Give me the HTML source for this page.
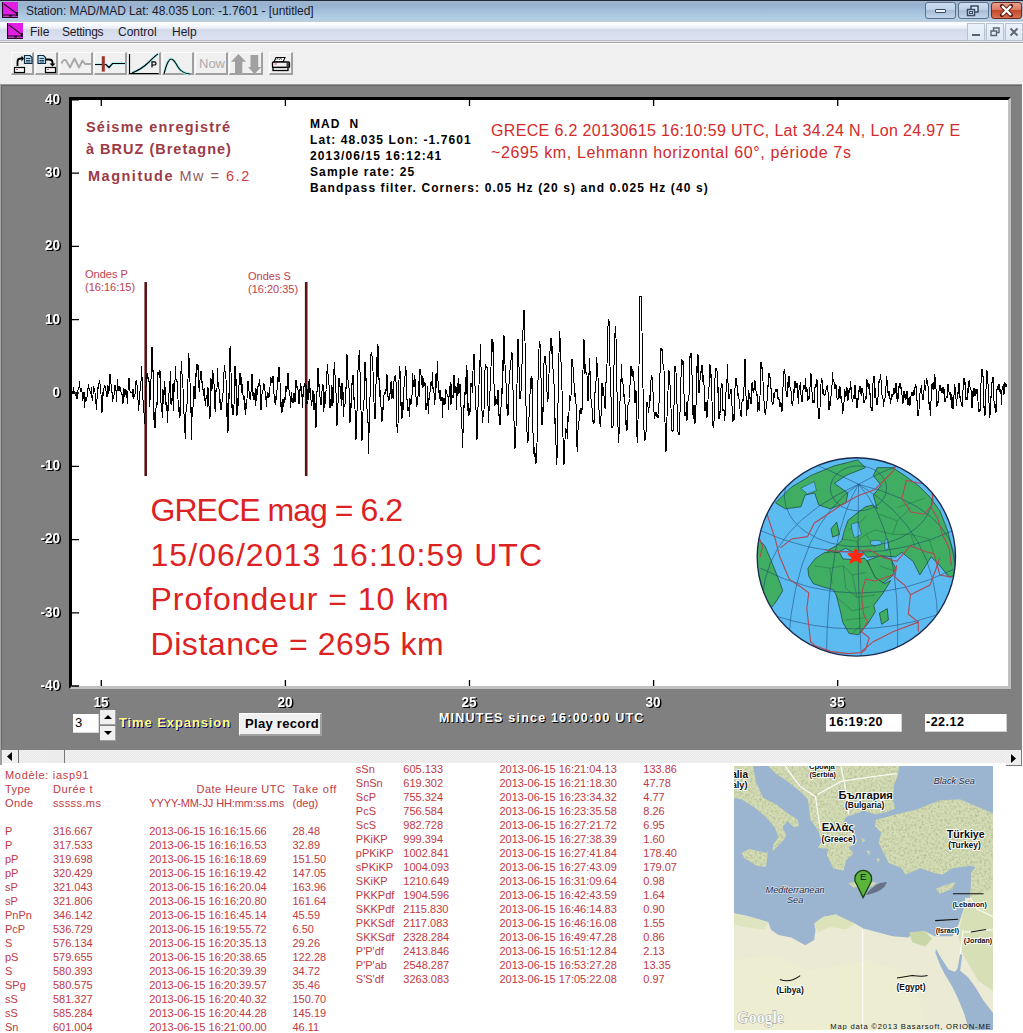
<!DOCTYPE html>
<html><head><meta charset="utf-8"><title>Station MAD</title>
<style>
*{margin:0;padding:0;box-sizing:border-box}
html,body{width:1023px;height:1033px;overflow:hidden}
body{position:relative;background:#fff;font-family:"Liberation Sans",sans-serif;color:#000}
.a{position:absolute;white-space:nowrap}
.tb{position:absolute;top:52px;height:23px;background:#f0f0f0;border-right:2px solid #a0a0a0;border-bottom:2px solid #a0a0a0;border-left:1px solid #fdfdfd;border-top:1px solid #fdfdfd}
.yl{position:absolute;font-weight:bold;font-size:13.5px;color:#fff;text-shadow:1.5px 1.5px 0 #000;transform:scaleY(1.14);text-align:right;width:40px;line-height:14px}
.xl{position:absolute;font-weight:bold;font-size:13.5px;color:#fff;text-shadow:1.5px 1.5px 0 #000;transform:scaleY(1.14);text-align:center;width:40px;line-height:14px}
.tbl{position:absolute;font-size:11px;color:#c0393f;line-height:14px}
.tbl div{height:14px;white-space:nowrap;position:relative}
.tbl span{position:absolute;top:0}
</style></head><body>
<!-- title bar -->
<div class="a" style="left:0;top:0;width:1023px;height:22px;background:linear-gradient(#1c2a3c 0px,#1c2a3c 1px,#a2b5cb 1px,#97b2d0 5px,#a6c1dc 12px,#b4d0e8 19px,#b8cad8 21px,#c8d4de 22px)"></div>
<svg class="a" style="left:2px;top:2px" width="16" height="16" viewBox="0 0 16 16"><rect x="0" y="0" width="16" height="16" fill="#e21ee2"/><rect x="1" y="13" width="14" height="2" fill="#b44cb4"/><path d="M0.5 0V16M0 15.5H16M1 13H16M2 2L14 11" stroke="#2a002a" stroke-width="1.2" fill="none"/><rect x="14" y="10" width="2" height="4" fill="#2a002a"/><rect x="7" y="13" width="3" height="1.5" fill="#2a002a"/></svg>
<div class="a" style="left:26px;top:3px;font-size:12px;line-height:16px;color:#1a1a2a;letter-spacing:-0.06px">Station: MAD/MAD Lat: 48.035 Lon: -1.7601 - [untitled]</div>
<!-- caption buttons -->
<div class="a" style="left:925px;top:2px;width:31px;height:17px;border:1px solid #5c6f86;border-radius:3px;background:linear-gradient(#d0dff0 0,#bcd0e8 45%,#a8bdd6 50%,#c0d4ea 100%)"></div>
<div class="a" style="left:935px;top:9px;width:11px;height:4px;border:1px solid #3a4a5e;background:#f0f6ff;border-radius:1px"></div>
<div class="a" style="left:958px;top:2px;width:31px;height:17px;border:1px solid #5c6f86;border-radius:3px;background:linear-gradient(#d0dff0 0,#bcd0e8 45%,#a8bdd6 50%,#c0d4ea 100%)"></div>
<svg class="a" style="left:966px;top:5px" width="14" height="12" viewBox="0 0 14 12"><rect x="5" y="1" width="7" height="6" fill="#dce8f6" stroke="#3a4a5e" stroke-width="1.5"/><rect x="1.5" y="4.5" width="7" height="6" fill="#dce8f6" stroke="#3a4a5e" stroke-width="1.5"/><rect x="3.5" y="6.5" width="3" height="2" fill="none" stroke="#3a4a5e" stroke-width="1"/></svg>
<div class="a" style="left:991px;top:2px;width:31px;height:17px;border:1px solid #6e2a22;border-radius:3px;background:linear-gradient(#eaa08e 0,#dc7a64 45%,#c44a2c 50%,#d8724e 100%)"></div>
<svg class="a" style="left:999px;top:4px" width="15" height="13" viewBox="0 0 15 13"><path d="M3 2L12 11M12 2L3 11" stroke="#5a2018" stroke-width="4.2" stroke-linecap="round"/><path d="M3 2L12 11M12 2L3 11" stroke="#fff" stroke-width="2.4" stroke-linecap="butt"/></svg>
<!-- menu bar -->
<div class="a" style="left:0;top:22px;width:1023px;height:22px;background:linear-gradient(#fbfdff 0px,#f9fbff 3px,#eef0f8 5px,#e6e9f8 7px,#d4dae8 7.5px,#dce2f3 17.5px,#b9bcc6 18px,#b9bcc6 19px,#e8e8e8 19px,#e8e8e8 20px,#a0a0a0 20px,#a0a0a0 21px,#ffffff 21px,#ffffff 22px)"></div>
<svg class="a" style="left:7px;top:23px" width="16" height="16" viewBox="0 0 16 16"><rect x="0" y="0" width="16" height="16" fill="#e21ee2"/><rect x="1" y="13" width="14" height="2" fill="#b44cb4"/><path d="M0.5 0V16M0 15.5H16M1 13H16M2 2L14 11" stroke="#2a002a" stroke-width="1.2" fill="none"/><rect x="14" y="10" width="2" height="4" fill="#2a002a"/><rect x="7" y="13" width="3" height="1.5" fill="#2a002a"/></svg>
<div class="a" style="left:30px;top:25px;font-size:12px;line-height:15px;color:#1a1a2a">File</div>
<div class="a" style="left:62px;top:25px;font-size:12px;line-height:15px;color:#1a1a2a;letter-spacing:-0.25px">Settings</div>
<div class="a" style="left:118px;top:25px;font-size:12px;line-height:15px;color:#1a1a2a">Control</div>
<div class="a" style="left:172px;top:25px;font-size:12px;line-height:15px;color:#1a1a2a">Help</div>
<!-- MDI buttons -->
<div class="a" style="left:967px;top:23px;width:18px;height:18px;border:1px solid #b6c2d0;background:linear-gradient(#eaf2fb,#dde8f4)"></div>
<div class="a" style="left:972px;top:34px;width:8px;height:2px;background:#5a6470"></div>
<div class="a" style="left:986px;top:23px;width:18px;height:18px;border:1px solid #b6c2d0;background:linear-gradient(#eaf2fb,#dde8f4)"></div>
<svg class="a" style="left:990px;top:27px" width="10" height="10" viewBox="0 0 10 10"><path d="M3.5 3.5V1H9V5.5H7M1 4H6.5V8.5H1Z" stroke="#5a6470" stroke-width="1.4" fill="none"/></svg>
<div class="a" style="left:1005px;top:23px;width:18px;height:18px;border:1px solid #b6c2d0;background:linear-gradient(#eaf2fb,#dde8f4)"></div>
<svg class="a" style="left:1009px;top:27px" width="10" height="10" viewBox="0 0 10 10"><path d="M1.5 1.5L8.5 8.5M8.5 1.5L1.5 8.5" stroke="#5a6470" stroke-width="1.8"/></svg>
<!-- toolbar bg -->
<div class="a" style="left:0;top:44px;width:1023px;height:40px;background:#f0f0f0"></div>
<!-- toolbar buttons -->
<div class="tb" style="left:11px;width:23px"></div>
<div class="tb" style="left:35px;width:23px"></div>
<div class="tb" style="left:59px;width:34px"></div>
<div class="tb" style="left:94px;width:33px"></div>
<div class="tb" style="left:128px;width:33px"></div>
<div class="tb" style="left:162px;width:32px"></div>
<div class="tb" style="left:195px;width:33px"></div>
<div class="tb" style="left:229px;width:34px"></div>
<div class="tb" style="left:269px;width:24px"></div>
<svg class="a" style="left:0;top:44px" width="300" height="40" viewBox="0 44 300 40">
 <!-- btn1 -->
 <path d="M24.5 55.5H30L32 57.5V63.5H24.5Z" fill="#bfe4f4" stroke="#0c2a44" stroke-width="1.2"/>
 <path d="M26 58.5H30.5M26 60.5H30.5M26 62H30.5" stroke="#0c2a44" stroke-width="0.9"/>
 <path d="M17.5 66V61.5Q17.5 58.5 21 58.5H22" stroke="#000" stroke-width="1.8" fill="none"/>
 <path d="M21.5 55.5L24 58.5L21.5 61.5Z" fill="#000"/>
 <rect x="14.5" y="67.5" width="10" height="5" fill="#fafafa" stroke="#000" stroke-width="1.2"/>
 <path d="M16 69.5H18" stroke="#d04050" stroke-width="0.9"/>
 <!-- btn2 -->
 <path d="M38 55.5H43.5L45.5 57.5V63.5H38Z" fill="#bfe4f4" stroke="#0c2a44" stroke-width="1.2"/>
 <path d="M39.5 58.5H44M39.5 60.5H44M39.5 62H44" stroke="#0c2a44" stroke-width="0.9"/>
 <path d="M46 59.5H49Q52.5 59.5 52.5 62.5V64" stroke="#000" stroke-width="1.8" fill="none"/>
 <path d="M49.5 63.5H55.5L52.5 66.5Z" fill="#000"/>
 <rect x="45.5" y="67.5" width="10" height="5" fill="#fafafa" stroke="#000" stroke-width="1.2"/>
 <path d="M47 69.5H49" stroke="#d04050" stroke-width="0.9"/>
 <!-- btn3 zigzag gray -->
 <path d="M61.5 63.5Q63.5 58.5 66 60.5L70 67.5L74.5 58.5L79 67.5L82.5 60.5L85 64H91" stroke="#a8a8a8" stroke-width="1.9" fill="none" stroke-linejoin="round"/>
 <!-- btn4 -->
 <path d="M95 64.5H106L109 67.5L112.5 63.5H125" stroke="#a8f0f0" stroke-width="2.6" fill="none"/>
 <path d="M95 64.5H106L109 67.5L112.5 63.5H125" stroke="#000" stroke-width="1.2" fill="none"/>
 <rect x="101.8" y="56.2" width="3" height="15.4" fill="#a0302a"/>
 <!-- btn5 -->
 <path d="M132 73Q142 69 149 62T158 54" stroke="#a8f0f0" stroke-width="2.8" fill="none"/>
 <path d="M132 73Q142 69 149 62T158 54" stroke="#000" stroke-width="1.1" fill="none"/>
 <path d="M129.5 54V73.5H158.5" stroke="#000" stroke-width="1.2" fill="none"/>
 <path d="M152 67.5V61.8H154.5Q156 61.8 156 63.4Q156 65 154.5 65H152" stroke="#000" stroke-width="1.2" fill="none"/>
 <!-- btn6 -->
 <path d="M164 74Q168 58 171.5 59Q174 59.5 178 67Q182 73.5 190 74" stroke="#a8f0f0" stroke-width="2.8" fill="none"/>
 <path d="M164 74Q168 58 171.5 59Q174 59.5 178 67Q182 73.5 190 74" stroke="#000" stroke-width="1.1" fill="none"/>
 <!-- arrows -->
 <path d="M231 61.8L238.5 54.1L246 61.8H242.3V73.6H235V61.8Z" fill="#a0a0a0"/>
 <path d="M250.5 55H258.2V67H261.3L254.5 74.1L248 67H250.5Z" fill="#a0a0a0"/>
 <!-- printer -->
 <path d="M276 57.5H285L283 62H274Z" fill="#fff" stroke="#000" stroke-width="1.1"/>
 <path d="M276.5 59.5L278 58.5L279 59.5L280.5 58.5L282 59.5" stroke="#000" stroke-width="0.7" fill="none"/>
 <rect x="272.5" y="62" width="17" height="5.5" rx="1" fill="#f4f4f4" stroke="#000" stroke-width="1.3"/>
 <rect x="273" y="67.5" width="15" height="3" fill="#fff" stroke="#000" stroke-width="1.3"/>
 <path d="M274.5 64H277" stroke="#d04050" stroke-width="0.9"/>
 <rect x="286.5" y="62.5" width="2.5" height="5" fill="#404040"/>
</svg>
<div class="a" style="left:199px;top:57px;font-size:13px;line-height:14px;color:#ababab">Now</div>
<!-- dark frame -->
<div class="a" style="left:0;top:84px;width:1022px;height:666px;background:#808080;border-top:1px solid #9a9a9a;border-left:1px solid #a8a8a8"><div style="position:absolute;left:0;top:0;right:0;bottom:0;border-top:1px solid #686868;border-left:1px solid #686868"></div></div>
<!-- plot frame -->
<div class="a" style="left:69px;top:97px;width:942px;height:592px;background:#fff;border-style:solid;border-width:3px;border-color:#000 #c0c0c0 #c0c0c0 #000"></div>
<svg class="a" style="left:0;top:0" width="1023" height="750" viewBox="0 0 1023 750">
 <g stroke="#000" stroke-width="1.3">
  <path d="M72 99.8H79M72 173.1H79M72 246.4H79M72 319.7H79M72 393H79M72 466.3H79M72 539.6H79M72 612.9H79M72 686H79"/>
  <path d="M101.3 100V106M285.4 100V106M469.5 100V106M653.6 100V106M837.7 100V106"/>
  <path d="M101.3 680V686M285.4 680V686M469.5 680V686M653.6 680V686M837.7 680V686"/>
 </g>
 <rect x="144.4" y="282" width="2.6" height="194" fill="#5a1414"/>
 <rect x="304.9" y="282" width="2.6" height="194" fill="#5a1414"/>
 <path d="M72.5,390.8 L73.0,394.1 L73.5,387.0 L74.0,390.7 L74.5,393.4 L75.0,394.0 L75.5,394.9 L76.0,393.7 L76.5,391.6 L77.0,399.3 L77.5,395.6 L78.0,390.5 L78.5,387.8 L79.0,388.6 L79.5,381.1 L80.0,387.6 L80.5,391.6 L81.0,389.6 L81.5,388.8 L82.0,391.8 L82.5,400.5 L83.0,397.8 L83.5,398.9 L84.0,391.9 L84.5,407.9 L85.0,397.0 L85.5,401.8 L86.0,396.9 L86.5,401.1 L87.0,397.1 L87.5,388.6 L88.0,388.4 L88.5,384.4 L89.0,388.5 L89.5,389.8 L90.0,391.2 L90.5,393.7 L91.0,391.9 L91.5,387.2 L92.0,398.3 L92.5,401.0 L93.0,394.9 L93.5,385.9 L94.0,388.4 L94.5,389.2 L95.0,392.4 L95.5,404.1 L96.0,402.5 L96.5,409.5 L97.0,399.2 L97.5,388.3 L98.0,389.3 L98.5,386.9 L99.0,383.6 L99.5,380.0 L100.0,384.3 L100.5,386.0 L101.0,394.1 L101.5,409.6 L102.0,412.9 L102.5,401.5 L103.0,391.8 L103.5,395.8 L104.0,388.0 L104.5,385.6 L105.0,386.4 L105.5,390.0 L106.0,391.2 L106.5,391.4 L107.0,397.1 L107.5,393.2 L108.0,385.3 L108.5,393.5 L109.0,391.1 L109.5,382.4 L110.0,373.9 L110.5,383.3 L111.0,383.8 L111.5,392.7 L112.0,392.2 L112.5,402.2 L113.0,396.9 L113.5,397.9 L114.0,394.9 L114.5,385.2 L115.0,384.8 L115.5,391.3 L116.0,390.1 L116.5,402.2 L117.0,391.1 L117.5,378.9 L118.0,386.4 L118.5,388.6 L119.0,391.2 L119.5,386.5 L120.0,389.5 L120.5,387.0 L121.0,392.0 L121.5,394.4 L122.0,394.4 L122.5,397.6 L123.0,403.6 L123.5,387.9 L124.0,392.5 L124.5,397.4 L125.0,388.9 L125.5,395.0 L126.0,393.0 L126.5,390.1 L127.0,397.9 L127.5,403.7 L128.0,390.9 L128.5,383.8 L129.0,378.1 L129.5,385.9 L130.0,391.0 L130.5,392.6 L131.0,393.1 L131.5,392.8 L132.0,392.5 L132.5,396.8 L133.0,388.8 L133.5,399.0 L134.0,396.3 L134.5,396.8 L135.0,394.4 L135.5,386.8 L136.0,381.6 L136.5,379.9 L137.0,384.5 L137.5,395.4 L138.0,399.5 L138.5,411.0 L139.0,405.7 L139.5,399.2 L140.0,391.4 L140.5,388.0 L141.0,381.8 L141.5,366.5 L142.0,376.9 L142.5,389.6 L143.0,399.6 L143.5,407.0 L144.0,413.0 L144.5,424.1 L145.0,413.4 L145.5,405.3 L146.0,386.4 L146.5,373.9 L147.0,379.2 L147.5,372.7 L148.0,377.4 L148.5,381.7 L149.0,379.8 L149.5,406.6 L150.0,398.5 L150.5,400.4 L151.0,379.8 L151.5,364.5 L152.0,346.8 L152.5,361.0 L153.0,371.9 L153.5,370.3 L154.0,420.2 L154.5,411.6 L155.0,428.3 L155.5,410.6 L156.0,407.8 L156.5,405.2 L157.0,402.1 L157.5,405.4 L158.0,372.4 L158.5,373.6 L159.0,371.8 L159.5,378.4 L160.0,370.5 L160.5,390.5 L161.0,403.1 L161.5,409.2 L162.0,412.3 L162.5,418.0 L163.0,389.4 L163.5,403.8 L164.0,395.6 L164.5,380.9 L165.0,386.4 L165.5,392.8 L166.0,404.4 L166.5,403.4 L167.0,410.7 L167.5,423.3 L168.0,405.2 L168.5,410.7 L169.0,393.1 L169.5,381.5 L170.0,385.9 L170.5,370.7 L171.0,403.8 L171.5,404.0 L172.0,398.3 L172.5,384.4 L173.0,401.3 L173.5,410.9 L174.0,382.6 L174.5,392.3 L175.0,380.6 L175.5,366.2 L176.0,379.1 L176.5,381.0 L177.0,381.3 L177.5,393.2 L178.0,399.2 L178.5,412.1 L179.0,406.7 L179.5,417.6 L180.0,417.9 L180.5,376.2 L181.0,370.9 L181.5,360.6 L182.0,374.2 L182.5,374.1 L183.0,388.0 L183.5,410.2 L184.0,413.6 L184.5,433.1 L185.0,432.0 L185.5,438.5 L186.0,411.8 L186.5,408.0 L187.0,404.5 L187.5,401.8 L188.0,379.2 L188.5,353.2 L189.0,358.4 L189.5,359.3 L190.0,382.1 L190.5,413.1 L191.0,404.6 L191.5,439.5 L192.0,417.6 L192.5,406.8 L193.0,408.0 L193.5,388.7 L194.0,385.6 L194.5,389.7 L195.0,399.4 L195.5,387.2 L196.0,373.0 L196.5,377.4 L197.0,363.7 L197.5,369.1 L198.0,370.0 L198.5,365.2 L199.0,387.9 L199.5,391.8 L200.0,380.4 L200.5,376.4 L201.0,371.3 L201.5,376.5 L202.0,382.6 L202.5,381.8 L203.0,390.2 L203.5,389.5 L204.0,396.0 L204.5,388.5 L205.0,401.1 L205.5,405.7 L206.0,398.6 L206.5,397.7 L207.0,395.0 L207.5,406.8 L208.0,387.2 L208.5,401.0 L209.0,406.0 L209.5,407.2 L210.0,418.7 L210.5,378.5 L211.0,386.9 L211.5,378.8 L212.0,390.7 L212.5,369.8 L213.0,373.0 L213.5,383.2 L214.0,383.6 L214.5,386.3 L215.0,409.0 L215.5,412.4 L216.0,390.5 L216.5,392.3 L217.0,388.5 L217.5,367.8 L218.0,381.7 L218.5,387.9 L219.0,388.3 L219.5,402.9 L220.0,399.5 L220.5,400.4 L221.0,410.2 L221.5,408.2 L222.0,402.5 L222.5,396.5 L223.0,393.0 L223.5,386.9 L224.0,372.5 L224.5,364.8 L225.0,370.9 L225.5,377.5 L226.0,378.6 L226.5,416.4 L227.0,416.7 L227.5,402.9 L228.0,432.9 L228.5,393.2 L229.0,400.2 L229.5,373.5 L230.0,347.9 L230.5,345.8 L231.0,372.2 L231.5,390.8 L232.0,408.3 L232.5,403.7 L233.0,414.5 L233.5,412.6 L234.0,405.5 L234.5,386.4 L235.0,366.4 L235.5,368.6 L236.0,385.9 L236.5,379.2 L237.0,416.1 L237.5,398.3 L238.0,406.3 L238.5,394.6 L239.0,385.5 L239.5,377.1 L240.0,373.4 L240.5,377.6 L241.0,384.9 L241.5,376.7 L242.0,392.9 L242.5,383.9 L243.0,395.1 L243.5,400.1 L244.0,396.3 L244.5,396.7 L245.0,410.1 L245.5,414.5 L246.0,402.8 L246.5,409.3 L247.0,399.5 L247.5,381.9 L248.0,381.3 L248.5,384.7 L249.0,390.7 L249.5,391.7 L250.0,399.2 L250.5,399.6 L251.0,392.1 L251.5,389.1 L252.0,373.9 L252.5,378.6 L253.0,395.7 L253.5,392.1 L254.0,400.2 L254.5,396.7 L255.0,393.3 L255.5,405.8 L256.0,388.4 L256.5,401.0 L257.0,394.5 L257.5,393.0 L258.0,385.6 L258.5,384.1 L259.0,386.7 L259.5,378.6 L260.0,384.5 L260.5,391.3 L261.0,410.1 L261.5,395.1 L262.0,394.3 L262.5,393.8 L263.0,390.4 L263.5,383.3 L264.0,385.3 L264.5,384.7 L265.0,390.8 L265.5,399.5 L266.0,396.5 L266.5,407.0 L267.0,396.5 L267.5,392.2 L268.0,398.1 L268.5,394.6 L269.0,395.8 L269.5,396.4 L270.0,386.7 L270.5,376.7 L271.0,383.1 L271.5,378.0 L272.0,380.4 L272.5,383.0 L273.0,375.6 L273.5,392.7 L274.0,394.0 L274.5,402.1 L275.0,401.4 L275.5,404.5 L276.0,396.5 L276.5,399.6 L277.0,390.3 L277.5,377.1 L278.0,382.8 L278.5,376.7 L279.0,366.9 L279.5,376.3 L280.0,382.3 L280.5,407.4 L281.0,401.4 L281.5,409.6 L282.0,412.5 L282.5,403.0 L283.0,399.0 L283.5,407.3 L284.0,403.3 L284.5,400.8 L285.0,396.9 L285.5,400.1 L286.0,386.0 L286.5,392.3 L287.0,389.8 L287.5,389.5 L288.0,373.1 L288.5,374.2 L289.0,390.3 L289.5,391.7 L290.0,395.6 L290.5,407.7 L291.0,402.7 L291.5,392.3 L292.0,398.6 L292.5,398.3 L293.0,402.8 L293.5,397.5 L294.0,392.7 L294.5,400.5 L295.0,402.4 L295.5,396.0 L296.0,379.6 L296.5,383.4 L297.0,387.9 L297.5,387.0 L298.0,389.7 L298.5,395.4 L299.0,403.9 L299.5,391.1 L300.0,389.1 L300.5,382.9 L301.0,390.6 L301.5,386.0 L302.0,397.3 L302.5,408.3 L303.0,394.0 L303.5,396.8 L304.0,386.6 L304.5,384.8 L305.0,383.5 L305.5,387.4 L306.0,384.6 L306.5,388.0 L307.0,404.1 L307.5,400.5 L308.0,389.0 L308.5,399.6 L309.0,380.8 L309.5,379.2 L310.0,392.9 L310.5,388.5 L311.0,399.5 L311.5,406.4 L312.0,401.7 L312.5,399.4 L313.0,390.4 L313.5,407.8 L314.0,410.2 L314.5,394.2 L315.0,403.3 L315.5,405.9 L316.0,427.8 L316.5,406.7 L317.0,390.8 L317.5,391.0 L318.0,367.6 L318.5,387.0 L319.0,383.3 L319.5,394.4 L320.0,397.0 L320.5,403.6 L321.0,405.1 L321.5,398.1 L322.0,390.6 L322.5,388.5 L323.0,384.5 L323.5,411.9 L324.0,406.6 L324.5,408.0 L325.0,392.3 L325.5,404.4 L326.0,391.1 L326.5,389.5 L327.0,370.9 L327.5,363.9 L328.0,374.1 L328.5,380.2 L329.0,385.3 L329.5,389.6 L330.0,408.4 L330.5,399.2 L331.0,406.4 L331.5,386.0 L332.0,386.9 L332.5,404.9 L333.0,404.0 L333.5,368.6 L334.0,371.6 L334.5,361.7 L335.0,374.5 L335.5,385.1 L336.0,392.8 L336.5,410.4 L337.0,425.6 L337.5,404.2 L338.0,403.0 L338.5,400.4 L339.0,377.7 L339.5,387.4 L340.0,385.3 L340.5,399.2 L341.0,392.4 L341.5,406.0 L342.0,382.7 L342.5,399.9 L343.0,391.6 L343.5,417.4 L344.0,406.0 L344.5,406.3 L345.0,404.8 L345.5,387.5 L346.0,389.9 L346.5,357.8 L347.0,354.5 L347.5,375.8 L348.0,379.8 L348.5,387.4 L349.0,387.8 L349.5,393.2 L350.0,422.6 L350.5,403.1 L351.0,407.8 L351.5,406.8 L352.0,383.3 L352.5,384.6 L353.0,375.0 L353.5,387.4 L354.0,400.3 L354.5,396.9 L355.0,409.4 L355.5,427.7 L356.0,439.8 L356.5,427.0 L357.0,411.3 L357.5,405.6 L358.0,369.8 L358.5,366.7 L359.0,355.0 L359.5,350.5 L360.0,372.0 L360.5,384.0 L361.0,410.1 L361.5,435.7 L362.0,441.3 L362.5,416.8 L363.0,411.8 L363.5,402.0 L364.0,400.7 L364.5,378.3 L365.0,362.4 L365.5,364.5 L366.0,380.8 L366.5,378.1 L367.0,408.9 L367.5,421.6 L368.0,420.7 L368.5,453.6 L369.0,433.0 L369.5,422.7 L370.0,397.8 L370.5,374.6 L371.0,354.2 L371.5,352.5 L372.0,356.3 L372.5,363.0 L373.0,371.2 L373.5,384.1 L374.0,402.2 L374.5,413.6 L375.0,419.2 L375.5,408.7 L376.0,384.5 L376.5,372.4 L377.0,357.0 L377.5,376.5 L378.0,343.9 L378.5,379.7 L379.0,379.9 L379.5,378.2 L380.0,396.8 L380.5,389.6 L381.0,406.9 L381.5,414.8 L382.0,421.8 L382.5,410.0 L383.0,406.6 L383.5,409.9 L384.0,394.7 L384.5,393.2 L385.0,393.8 L385.5,391.1 L386.0,389.1 L386.5,390.5 L387.0,374.3 L387.5,387.0 L388.0,396.6 L388.5,401.0 L389.0,396.3 L389.5,400.3 L390.0,393.5 L390.5,393.0 L391.0,382.0 L391.5,380.9 L392.0,398.6 L392.5,392.5 L393.0,389.3 L393.5,398.5 L394.0,380.7 L394.5,380.0 L395.0,375.9 L395.5,375.9 L396.0,381.5 L396.5,396.1 L397.0,427.3 L397.5,432.9 L398.0,424.5 L398.5,390.2 L399.0,380.1 L399.5,365.8 L400.0,370.6 L400.5,392.5 L401.0,405.7 L401.5,402.0 L402.0,418.7 L402.5,402.2 L403.0,410.8 L403.5,401.7 L404.0,387.5 L404.5,377.0 L405.0,376.2 L405.5,366.3 L406.0,369.1 L406.5,399.1 L407.0,399.3 L407.5,399.7 L408.0,411.0 L408.5,408.1 L409.0,406.9 L409.5,417.0 L410.0,398.5 L410.5,404.3 L411.0,404.4 L411.5,398.0 L412.0,395.7 L412.5,373.1 L413.0,382.5 L413.5,380.0 L414.0,387.4 L414.5,375.5 L415.0,379.2 L415.5,384.4 L416.0,397.1 L416.5,406.1 L417.0,405.2 L417.5,400.4 L418.0,395.6 L418.5,395.6 L419.0,381.3 L419.5,396.5 L420.0,369.4 L420.5,373.6 L421.0,375.3 L421.5,375.8 L422.0,385.2 L422.5,375.7 L423.0,388.0 L423.5,378.1 L424.0,384.2 L424.5,385.9 L425.0,382.4 L425.5,403.6 L426.0,409.8 L426.5,409.4 L427.0,403.7 L427.5,385.9 L428.0,406.2 L428.5,414.4 L429.0,397.7 L429.5,399.9 L430.0,392.6 L430.5,381.8 L431.0,386.7 L431.5,380.9 L432.0,384.2 L432.5,372.1 L433.0,389.2 L433.5,386.8 L434.0,392.7 L434.5,405.2 L435.0,400.0 L435.5,389.9 L436.0,374.4 L436.5,388.2 L437.0,373.7 L437.5,361.4 L438.0,381.2 L438.5,389.0 L439.0,392.6 L439.5,398.8 L440.0,390.0 L440.5,398.2 L441.0,400.9 L441.5,397.5 L442.0,397.0 L442.5,418.2 L443.0,399.0 L443.5,404.6 L444.0,397.8 L444.5,403.0 L445.0,404.9 L445.5,389.3 L446.0,390.6 L446.5,391.0 L447.0,394.2 L447.5,396.2 L448.0,396.3 L448.5,410.2 L449.0,397.4 L449.5,392.2 L450.0,386.2 L450.5,382.1 L451.0,404.7 L451.5,384.3 L452.0,397.6 L452.5,396.6 L453.0,398.3 L453.5,392.9 L454.0,374.8 L454.5,386.1 L455.0,393.2 L455.5,390.7 L456.0,386.3 L456.5,409.7 L457.0,395.6 L457.5,393.6 L458.0,383.2 L458.5,377.8 L459.0,393.5 L459.5,386.8 L460.0,383.6 L460.5,386.3 L461.0,406.9 L461.5,410.0 L462.0,428.8 L462.5,447.7 L463.0,434.2 L463.5,414.5 L464.0,405.2 L464.5,407.7 L465.0,392.0 L465.5,376.6 L466.0,395.3 L466.5,365.1 L467.0,368.5 L467.5,410.8 L468.0,402.4 L468.5,416.1 L469.0,407.4 L469.5,414.7 L470.0,412.5 L470.5,396.4 L471.0,383.1 L471.5,383.6 L472.0,387.4 L472.5,392.8 L473.0,370.6 L473.5,366.3 L474.0,353.8 L474.5,369.5 L475.0,385.6 L475.5,403.4 L476.0,409.8 L476.5,429.7 L477.0,439.6 L477.5,421.2 L478.0,406.7 L478.5,401.9 L479.0,385.9 L479.5,360.4 L480.0,367.3 L480.5,343.6 L481.0,367.2 L481.5,371.6 L482.0,411.1 L482.5,422.7 L483.0,417.5 L483.5,415.2 L484.0,411.0 L484.5,374.2 L485.0,370.2 L485.5,365.1 L486.0,365.8 L486.5,368.1 L487.0,365.9 L487.5,394.4 L488.0,405.8 L488.5,422.7 L489.0,408.7 L489.5,410.7 L490.0,391.1 L490.5,379.2 L491.0,367.1 L491.5,346.2 L492.0,339.1 L492.5,351.5 L493.0,347.2 L493.5,342.5 L494.0,383.7 L494.5,385.5 L495.0,405.6 L495.5,396.4 L496.0,404.8 L496.5,398.7 L497.0,400.8 L497.5,405.1 L498.0,389.9 L498.5,401.8 L499.0,415.7 L499.5,414.5 L500.0,425.0 L500.5,413.9 L501.0,407.4 L501.5,404.8 L502.0,388.0 L502.5,393.6 L503.0,359.8 L503.5,370.6 L504.0,335.3 L504.5,349.8 L505.0,364.2 L505.5,377.2 L506.0,382.8 L506.5,399.8 L507.0,409.2 L507.5,404.3 L508.0,415.7 L508.5,399.2 L509.0,384.3 L509.5,370.5 L510.0,370.8 L510.5,362.6 L511.0,360.1 L511.5,356.2 L512.0,352.0 L512.5,379.0 L513.0,389.8 L513.5,410.1 L514.0,420.9 L514.5,430.8 L515.0,448.3 L515.5,447.8 L516.0,426.9 L516.5,412.8 L517.0,385.2 L517.5,354.5 L518.0,338.8 L518.5,346.6 L519.0,366.8 L519.5,377.1 L520.0,399.4 L520.5,392.8 L521.0,391.6 L521.5,380.7 L522.0,364.8 L522.5,344.7 L523.0,330.9 L523.5,317.5 L524.0,309.7 L524.5,327.5 L525.0,341.2 L525.5,381.4 L526.0,405.5 L526.5,430.1 L527.0,432.0 L527.5,442.7 L528.0,441.0 L528.5,432.5 L529.0,417.9 L529.5,398.9 L530.0,394.7 L530.5,377.9 L531.0,389.8 L531.5,379.4 L532.0,375.8 L532.5,413.9 L533.0,432.8 L533.5,454.4 L534.0,446.3 L534.5,456.7 L535.0,452.8 L535.5,462.1 L536.0,463.6 L536.5,451.5 L537.0,442.8 L537.5,414.9 L538.0,380.5 L538.5,358.0 L539.0,348.7 L539.5,341.9 L540.0,342.0 L540.5,377.3 L541.0,378.1 L541.5,394.4 L542.0,425.4 L542.5,407.1 L543.0,413.8 L543.5,391.4 L544.0,362.8 L544.5,357.4 L545.0,356.4 L545.5,360.2 L546.0,364.9 L546.5,374.5 L547.0,391.6 L547.5,402.0 L548.0,399.7 L548.5,386.2 L549.0,374.0 L549.5,358.8 L550.0,350.9 L550.5,350.1 L551.0,338.0 L551.5,353.5 L552.0,345.5 L552.5,367.0 L553.0,368.4 L553.5,378.7 L554.0,384.0 L554.5,398.5 L555.0,423.6 L555.5,418.5 L556.0,444.5 L556.5,464.8 L557.0,459.8 L557.5,423.1 L558.0,403.8 L558.5,381.7 L559.0,353.5 L559.5,331.1 L560.0,338.2 L560.5,348.1 L561.0,361.9 L561.5,372.0 L562.0,389.9 L562.5,418.4 L563.0,437.4 L563.5,464.8 L564.0,464.8 L564.5,456.2 L565.0,439.8 L565.5,428.3 L566.0,432.7 L566.5,429.5 L567.0,432.7 L567.5,438.9 L568.0,416.4 L568.5,421.6 L569.0,412.4 L569.5,394.9 L570.0,396.4 L570.5,401.2 L571.0,396.2 L571.5,376.1 L572.0,358.9 L572.5,360.7 L573.0,367.1 L573.5,377.8 L574.0,383.1 L574.5,387.8 L575.0,397.4 L575.5,393.5 L576.0,403.5 L576.5,411.8 L577.0,446.8 L577.5,452.2 L578.0,430.0 L578.5,422.9 L579.0,421.5 L579.5,417.3 L580.0,410.6 L580.5,409.6 L581.0,414.1 L581.5,408.2 L582.0,410.7 L582.5,391.5 L583.0,369.9 L583.5,355.8 L584.0,339.5 L584.5,347.2 L585.0,373.7 L585.5,363.8 L586.0,372.9 L586.5,373.0 L587.0,375.3 L587.5,397.1 L588.0,401.4 L588.5,388.2 L589.0,373.5 L589.5,358.3 L590.0,374.8 L590.5,370.7 L591.0,399.2 L591.5,403.5 L592.0,407.6 L592.5,418.9 L593.0,422.4 L593.5,421.1 L594.0,423.7 L594.5,409.6 L595.0,392.6 L595.5,392.1 L596.0,381.9 L596.5,357.2 L597.0,363.3 L597.5,363.2 L598.0,376.9 L598.5,397.4 L599.0,409.6 L599.5,422.1 L600.0,424.2 L600.5,426.8 L601.0,415.8 L601.5,409.3 L602.0,383.1 L602.5,387.8 L603.0,395.5 L603.5,387.5 L604.0,395.7 L604.5,400.9 L605.0,407.5 L605.5,408.3 L606.0,382.9 L606.5,383.0 L607.0,364.0 L607.5,352.7 L608.0,326.2 L608.5,318.8 L609.0,320.4 L609.5,346.9 L610.0,366.2 L610.5,395.5 L611.0,396.7 L611.5,422.2 L612.0,428.1 L612.5,425.7 L613.0,427.8 L613.5,395.0 L614.0,365.4 L614.5,347.0 L615.0,333.6 L615.5,325.8 L616.0,338.4 L616.5,366.8 L617.0,391.5 L617.5,412.0 L618.0,426.9 L618.5,442.9 L619.0,435.2 L619.5,412.3 L620.0,401.6 L620.5,382.1 L621.0,379.9 L621.5,364.0 L622.0,381.8 L622.5,377.7 L623.0,383.6 L623.5,397.2 L624.0,394.1 L624.5,399.8 L625.0,403.7 L625.5,425.3 L626.0,419.9 L626.5,425.3 L627.0,430.5 L627.5,422.1 L628.0,404.7 L628.5,403.4 L629.0,401.6 L629.5,398.5 L630.0,385.5 L630.5,378.1 L631.0,366.2 L631.5,375.5 L632.0,368.4 L632.5,377.2 L633.0,372.1 L633.5,370.9 L634.0,381.0 L634.5,390.1 L635.0,402.6 L635.5,398.6 L636.0,390.2 L636.5,414.0 L637.0,437.2 L637.5,442.7 L638.0,420.0 L638.5,405.4 L639.0,365.9 L639.5,330.8 L640.0,296.2 L640.5,296.2 L641.0,296.2 L641.5,303.9 L642.0,330.7 L642.5,368.8 L643.0,388.3 L643.5,414.0 L644.0,430.0 L644.5,431.5 L645.0,440.5 L645.5,435.4 L646.0,432.6 L646.5,419.0 L647.0,402.5 L647.5,404.0 L648.0,406.6 L648.5,412.8 L649.0,408.7 L649.5,394.9 L650.0,401.6 L650.5,396.0 L651.0,380.3 L651.5,376.3 L652.0,377.0 L652.5,386.3 L653.0,391.6 L653.5,398.5 L654.0,412.1 L654.5,418.8 L655.0,416.3 L655.5,415.1 L656.0,412.0 L656.5,416.3 L657.0,416.3 L657.5,413.8 L658.0,417.8 L658.5,414.5 L659.0,403.4 L659.5,386.2 L660.0,372.9 L660.5,370.3 L661.0,348.4 L661.5,351.1 L662.0,348.9 L662.5,350.9 L663.0,363.6 L663.5,364.9 L664.0,370.4 L664.5,384.4 L665.0,421.9 L665.5,449.9 L666.0,452.1 L666.5,438.3 L667.0,417.0 L667.5,407.9 L668.0,391.2 L668.5,379.1 L669.0,370.5 L669.5,382.0 L670.0,384.7 L670.5,395.0 L671.0,408.3 L671.5,419.2 L672.0,431.0 L672.5,430.7 L673.0,432.1 L673.5,414.4 L674.0,405.5 L674.5,391.2 L675.0,365.8 L675.5,371.0 L676.0,372.3 L676.5,390.6 L677.0,403.7 L677.5,427.7 L678.0,432.0 L678.5,434.6 L679.0,434.7 L679.5,433.7 L680.0,412.5 L680.5,395.5 L681.0,377.3 L681.5,359.1 L682.0,363.7 L682.5,365.2 L683.0,360.5 L683.5,376.5 L684.0,393.5 L684.5,408.4 L685.0,416.4 L685.5,413.3 L686.0,412.5 L686.5,401.9 L687.0,420.6 L687.5,408.1 L688.0,400.7 L688.5,397.0 L689.0,395.5 L689.5,387.2 L690.0,356.2 L690.5,357.6 L691.0,352.7 L691.5,372.7 L692.0,375.2 L692.5,382.7 L693.0,415.2 L693.5,418.9 L694.0,404.7 L694.5,411.4 L695.0,424.0 L695.5,410.6 L696.0,405.0 L696.5,391.1 L697.0,366.5 L697.5,373.0 L698.0,354.3 L698.5,380.2 L699.0,393.1 L699.5,381.2 L700.0,380.3 L700.5,374.7 L701.0,370.8 L701.5,372.5 L702.0,364.9 L702.5,381.9 L703.0,375.8 L703.5,375.5 L704.0,384.9 L704.5,393.3 L705.0,410.9 L705.5,405.9 L706.0,402.0 L706.5,417.1 L707.0,417.4 L707.5,413.2 L708.0,399.8 L708.5,394.1 L709.0,387.5 L709.5,372.2 L710.0,364.5 L710.5,377.7 L711.0,373.9 L711.5,387.2 L712.0,401.3 L712.5,423.2 L713.0,425.6 L713.5,428.0 L714.0,421.9 L714.5,397.3 L715.0,378.4 L715.5,368.7 L716.0,367.7 L716.5,369.1 L717.0,370.6 L717.5,392.8 L718.0,385.2 L718.5,418.0 L719.0,418.9 L719.5,411.5 L720.0,415.2 L720.5,413.5 L721.0,388.4 L721.5,386.3 L722.0,383.4 L722.5,403.9 L723.0,411.4 L723.5,409.6 L724.0,409.9 L724.5,420.9 L725.0,416.5 L725.5,411.1 L726.0,392.8 L726.5,380.6 L727.0,379.6 L727.5,364.4 L728.0,382.7 L728.5,383.6 L729.0,399.4 L729.5,394.2 L730.0,394.1 L730.5,391.9 L731.0,389.0 L731.5,393.1 L732.0,405.5 L732.5,412.2 L733.0,421.8 L733.5,414.5 L734.0,420.3 L734.5,410.9 L735.0,388.0 L735.5,382.8 L736.0,377.7 L736.5,386.2 L737.0,384.8 L737.5,395.5 L738.0,394.3 L738.5,393.0 L739.0,398.7 L739.5,401.2 L740.0,409.4 L740.5,414.5 L741.0,415.5 L741.5,417.2 L742.0,402.3 L742.5,399.6 L743.0,401.2 L743.5,388.9 L744.0,387.3 L744.5,370.8 L745.0,358.8 L745.5,370.0 L746.0,395.5 L746.5,415.6 L747.0,399.8 L747.5,405.0 L748.0,409.8 L748.5,390.2 L749.0,399.4 L749.5,393.5 L750.0,396.5 L750.5,402.6 L751.0,404.3 L751.5,382.9 L752.0,391.7 L752.5,382.1 L753.0,387.4 L753.5,393.0 L754.0,389.8 L754.5,387.3 L755.0,380.5 L755.5,388.1 L756.0,390.7 L756.5,396.4 L757.0,393.0 L757.5,412.0 L758.0,402.0 L758.5,410.3 L759.0,406.1 L759.5,411.4 L760.0,396.0 L760.5,378.4 L761.0,362.1 L761.5,368.8 L762.0,366.5 L762.5,370.9 L763.0,381.2 L763.5,394.3 L764.0,401.1 L764.5,409.8 L765.0,412.6 L765.5,415.3 L766.0,408.6 L766.5,406.5 L767.0,400.8 L767.5,395.9 L768.0,384.7 L768.5,386.7 L769.0,373.0 L769.5,378.2 L770.0,376.4 L770.5,388.1 L771.0,388.5 L771.5,396.6 L772.0,402.2 L772.5,404.6 L773.0,404.7 L773.5,394.4 L774.0,395.2 L774.5,397.6 L775.0,392.1 L775.5,389.1 L776.0,392.1 L776.5,391.3 L777.0,389.4 L777.5,390.3 L778.0,398.3 L778.5,397.6 L779.0,400.4 L779.5,399.9 L780.0,406.6 L780.5,403.0 L781.0,403.2 L781.5,409.0 L782.0,411.6 L782.5,391.3 L783.0,387.4 L783.5,385.3 L784.0,371.6 L784.5,369.1 L785.0,373.7 L785.5,384.4 L786.0,390.7 L786.5,393.8 L787.0,397.1 L787.5,392.2 L788.0,382.4 L788.5,387.7 L789.0,376.3 L789.5,381.5 L790.0,386.6 L790.5,390.5 L791.0,390.8 L791.5,400.9 L792.0,403.9 L792.5,406.4 L793.0,400.8 L793.5,400.3 L794.0,389.1 L794.5,393.1 L795.0,381.6 L795.5,381.7 L796.0,388.3 L796.5,386.5 L797.0,382.9 L797.5,390.9 L798.0,397.6 L798.5,404.4 L799.0,389.9 L799.5,388.9 L800.0,385.4 L800.5,381.8 L801.0,394.9 L801.5,397.9 L802.0,401.9 L802.5,395.5 L803.0,390.3 L803.5,386.1 L804.0,385.5 L804.5,388.8 L805.0,385.5 L805.5,378.0 L806.0,391.9 L806.5,387.9 L807.0,389.0 L807.5,394.7 L808.0,400.5 L808.5,395.9 L809.0,399.4 L809.5,395.9 L810.0,387.6 L810.5,373.3 L811.0,373.7 L811.5,375.4 L812.0,391.9 L812.5,398.8 L813.0,403.3 L813.5,401.5 L814.0,403.0 L814.5,391.5 L815.0,387.2 L815.5,383.8 L816.0,387.5 L816.5,383.3 L817.0,379.3 L817.5,397.6 L818.0,408.1 L818.5,419.0 L819.0,416.6 L819.5,417.6 L820.0,407.7 L820.5,396.9 L821.0,383.8 L821.5,377.7 L822.0,379.9 L822.5,385.1 L823.0,393.5 L823.5,389.1 L824.0,394.9 L824.5,395.0 L825.0,395.3 L825.5,392.4 L826.0,390.2 L826.5,386.5 L827.0,388.6 L827.5,385.4 L828.0,392.3 L828.5,394.4 L829.0,409.9 L829.5,401.0 L830.0,406.1 L830.5,400.6 L831.0,396.6 L831.5,388.3 L832.0,385.1 L832.5,372.1 L833.0,379.2 L833.5,381.2 L834.0,381.9 L834.5,388.1 L835.0,387.4 L835.5,389.2 L836.0,384.3 L836.5,392.2 L837.0,397.9 L837.5,398.3 L838.0,399.8 L838.5,389.3 L839.0,398.5 L839.5,388.2 L840.0,386.5 L840.5,398.6 L841.0,395.6 L841.5,400.8 L842.0,402.8 L842.5,413.6 L843.0,407.8 L843.5,410.9 L844.0,402.8 L844.5,389.9 L845.0,390.5 L845.5,397.3 L846.0,395.4 L846.5,395.4 L847.0,387.5 L847.5,396.3 L848.0,400.5 L848.5,389.9 L849.0,392.7 L849.5,387.9 L850.0,390.6 L850.5,380.7 L851.0,386.7 L851.5,396.3 L852.0,398.8 L852.5,400.9 L853.0,399.3 L853.5,395.0 L854.0,399.2 L854.5,396.3 L855.0,385.1 L855.5,392.6 L856.0,398.6 L856.5,398.6 L857.0,407.8 L857.5,402.6 L858.0,398.0 L858.5,400.0 L859.0,390.1 L859.5,390.8 L860.0,386.3 L860.5,390.9 L861.0,394.0 L861.5,396.4 L862.0,388.4 L862.5,389.5 L863.0,392.6 L863.5,397.9 L864.0,402.7 L864.5,402.3 L865.0,400.4 L865.5,396.3 L866.0,399.0 L866.5,390.5 L867.0,379.3 L867.5,387.3 L868.0,382.9 L868.5,389.4 L869.0,383.9 L869.5,394.7 L870.0,392.3 L870.5,407.3 L871.0,406.5 L871.5,410.9 L872.0,410.9 L872.5,399.8 L873.0,382.7 L873.5,381.6 L874.0,376.3 L874.5,380.4 L875.0,398.0 L875.5,388.3 L876.0,397.8 L876.5,403.0 L877.0,404.6 L877.5,400.9 L878.0,397.1 L878.5,383.8 L879.0,381.3 L879.5,382.1 L880.0,379.1 L880.5,373.6 L881.0,379.7 L881.5,385.5 L882.0,395.3 L882.5,396.6 L883.0,399.2 L883.5,406.6 L884.0,399.6 L884.5,402.4 L885.0,397.9 L885.5,396.7 L886.0,386.2 L886.5,376.3 L887.0,382.1 L887.5,381.2 L888.0,392.9 L888.5,391.5 L889.0,395.6 L889.5,390.8 L890.0,398.9 L890.5,403.9 L891.0,398.1 L891.5,399.4 L892.0,394.2 L892.5,396.4 L893.0,395.4 L893.5,393.6 L894.0,388.2 L894.5,394.1 L895.0,389.8 L895.5,392.8 L896.0,382.9 L896.5,392.8 L897.0,399.0 L897.5,401.6 L898.0,392.9 L898.5,398.8 L899.0,386.5 L899.5,388.3 L900.0,383.0 L900.5,389.1 L901.0,387.2 L901.5,394.2 L902.0,394.7 L902.5,400.7 L903.0,403.7 L903.5,394.0 L904.0,390.9 L904.5,395.9 L905.0,397.8 L905.5,394.0 L906.0,399.7 L906.5,393.0 L907.0,391.2 L907.5,400.1 L908.0,405.2 L908.5,397.7 L909.0,400.0 L909.5,397.0 L910.0,405.6 L910.5,401.1 L911.0,395.9 L911.5,393.7 L912.0,391.9 L912.5,394.7 L913.0,395.6 L913.5,392.0 L914.0,389.9 L914.5,395.1 L915.0,387.2 L915.5,385.8 L916.0,387.5 L916.5,385.8 L917.0,400.4 L917.5,400.6 L918.0,416.4 L918.5,412.3 L919.0,409.7 L919.5,400.4 L920.0,393.2 L920.5,389.7 L921.0,388.5 L921.5,385.5 L922.0,394.1 L922.5,399.2 L923.0,400.2 L923.5,396.0 L924.0,390.3 L924.5,380.0 L925.0,389.1 L925.5,391.2 L926.0,384.7 L926.5,377.7 L927.0,379.5 L927.5,384.8 L928.0,385.7 L928.5,390.5 L929.0,403.7 L929.5,410.0 L930.0,402.2 L930.5,416.4 L931.0,400.9 L931.5,396.8 L932.0,384.2 L932.5,383.7 L933.0,389.3 L933.5,382.2 L934.0,390.2 L934.5,374.5 L935.0,377.2 L935.5,387.5 L936.0,389.0 L936.5,398.2 L937.0,406.5 L937.5,401.2 L938.0,403.1 L938.5,394.7 L939.0,391.5 L939.5,386.9 L940.0,384.9 L940.5,390.0 L941.0,389.6 L941.5,388.7 L942.0,393.0 L942.5,392.8 L943.0,387.2 L943.5,393.5 L944.0,388.4 L944.5,401.7 L945.0,399.8 L945.5,401.4 L946.0,397.7 L946.5,397.0 L947.0,395.9 L947.5,397.5 L948.0,384.1 L948.5,388.5 L949.0,392.2 L949.5,395.0 L950.0,392.2 L950.5,395.1 L951.0,399.7 L951.5,393.9 L952.0,407.5 L952.5,408.3 L953.0,396.7 L953.5,409.0 L954.0,394.9 L954.5,384.2 L955.0,387.2 L955.5,392.1 L956.0,398.8 L956.5,405.9 L957.0,399.0 L957.5,392.3 L958.0,393.8 L958.5,388.8 L959.0,383.5 L959.5,385.4 L960.0,398.3 L960.5,396.1 L961.0,402.4 L961.5,404.5 L962.0,405.7 L962.5,406.0 L963.0,390.3 L963.5,385.4 L964.0,378.2 L964.5,384.6 L965.0,381.8 L965.5,389.4 L966.0,400.2 L966.5,397.1 L967.0,400.3 L967.5,388.6 L968.0,387.9 L968.5,392.5 L969.0,381.4 L969.5,380.7 L970.0,386.9 L970.5,389.8 L971.0,389.9 L971.5,400.0 L972.0,408.1 L972.5,403.4 L973.0,390.9 L973.5,388.5 L974.0,396.8 L974.5,388.4 L975.0,395.8 L975.5,389.5 L976.0,391.2 L976.5,394.2 L977.0,389.0 L977.5,392.9 L978.0,401.4 L978.5,407.7 L979.0,411.6 L979.5,408.7 L980.0,412.0 L980.5,392.3 L981.0,383.5 L981.5,380.1 L982.0,369.2 L982.5,375.9 L983.0,375.3 L983.5,392.5 L984.0,407.5 L984.5,406.8 L985.0,416.0 L985.5,406.1 L986.0,389.5 L986.5,377.2 L987.0,370.3 L987.5,378.3 L988.0,384.3 L988.5,388.4 L989.0,402.5 L989.5,418.3 L990.0,415.6 L990.5,409.7 L991.0,396.0 L991.5,396.9 L992.0,381.9 L992.5,382.5 L993.0,377.2 L993.5,386.0 L994.0,400.8 L994.5,405.8 L995.0,408.2 L995.5,404.4 L996.0,412.6 L996.5,402.4 L997.0,389.0 L997.5,385.7 L998.0,390.4 L998.5,387.7 L999.0,383.6 L999.5,392.3 L1000.0,389.2 L1000.5,389.7 L1001.0,394.0 L1001.5,404.7 L1002.0,390.0 L1002.5,389.7 L1003.0,385.8 L1003.5,384.2 L1004.0,394.8 L1004.5,381.9 L1005.0,385.0 L1005.5,382.7 L1006.0,386.6 L1006.5,385.4 L1007.0,386.7" fill="none" stroke="#000" stroke-width="1" shape-rendering="crispEdges"/>
</svg>
<!-- y labels -->
<div class="yl" style="left:20px;top:92px">40</div>
<div class="yl" style="left:20px;top:165px">30</div>
<div class="yl" style="left:20px;top:238px">20</div>
<div class="yl" style="left:20px;top:312px">10</div>
<div class="yl" style="left:20px;top:385px">0</div>
<div class="yl" style="left:20px;top:458px">-10</div>
<div class="yl" style="left:20px;top:531px">-20</div>
<div class="yl" style="left:20px;top:605px">-30</div>
<div class="yl" style="left:20px;top:678px">-40</div>
<!-- x labels -->
<div class="xl" style="left:81px;top:695px">15</div>
<div class="xl" style="left:265px;top:695px">20</div>
<div class="xl" style="left:449px;top:695px">25</div>
<div class="xl" style="left:633px;top:695px">30</div>
<div class="xl" style="left:817px;top:695px">35</div>
<div class="a" style="left:439px;top:711px;font-weight:bold;font-size:12.5px;line-height:14px;color:#fff;text-shadow:1px 1px 0 #000;letter-spacing:1.2px">MINUTES since 16:00:00 UTC</div>
<!-- controls -->
<div class="a" style="left:73px;top:714px;width:26px;height:19px;background:#fff;border-right:1px solid #d8d8d8;border-bottom:1px solid #d8d8d8"></div>
<div class="a" style="left:75px;top:716px;font-size:13px;line-height:14px">3</div>
<div class="a" style="left:100px;top:710px;width:16px;height:15px;background:#f0f0f0;border-right:1px solid #a0a0a0;border-bottom:1px solid #a0a0a0"></div>
<div class="a" style="left:100px;top:726px;width:16px;height:15px;background:#f0f0f0;border-right:1px solid #a0a0a0;border-bottom:1px solid #a0a0a0"></div>
<svg class="a" style="left:100px;top:710px" width="16" height="31" viewBox="0 0 16 31"><path d="M4 9L8 5L12 9Z" fill="#000"/><path d="M4 21L8 25L12 21Z" fill="#000"/></svg>
<div class="a" style="left:119px;top:716px;font-weight:bold;font-size:13px;line-height:14px;color:#ffff80;text-shadow:1px 1px 0 #000080;letter-spacing:0.9px">Time Expansion</div>
<div class="a" style="left:239px;top:713px;width:83px;height:23px;background:#f0f0f0;border-right:2px solid #a0a0a0;border-bottom:2px solid #a0a0a0;border-left:1px solid #fff;border-top:1px solid #fff"></div>
<div class="a" style="left:245px;top:717px;font-weight:bold;font-size:13px;line-height:14px;letter-spacing:0.3px">Play record</div>
<div class="a" style="left:826px;top:714px;width:76px;height:18px;background:#fff;border-right:1px solid #d0d0d0;border-bottom:1px solid #d0d0d0"></div>
<div class="a" style="left:829px;top:716px;font-weight:bold;font-size:12.5px;line-height:13px;letter-spacing:0.5px">16:19:20</div>
<div class="a" style="left:925px;top:714px;width:82px;height:18px;background:#fff;border-right:1px solid #d0d0d0;border-bottom:1px solid #d0d0d0"></div>
<div class="a" style="left:926px;top:716px;font-weight:bold;font-size:12.5px;line-height:13px;letter-spacing:0.5px">-22.12</div>
<!-- plot texts -->
<div class="a" style="left:86px;top:116px;font-weight:bold;font-size:14.5px;line-height:22px;color:#9c3a46"><div style="letter-spacing:1.2px">Séisme enregistré</div><div style="letter-spacing:1.0px">à BRUZ (Bretagne)</div></div>
<div class="a" style="left:88px;top:166px;font-size:14.5px;line-height:20px;color:#9c3a46;letter-spacing:1.5px"><b>Magnitude</b> <span style="color:#8e5a62">Mw =</span> <span style="color:#d03c3c">6.2</span></div>
<div class="a" style="left:310px;top:116px;font-weight:bold;font-size:12px;line-height:16px;color:#000;letter-spacing:1.1px">MAD&nbsp;&nbsp;N<br>Lat: 48.035 Lon: -1.7601<br>2013/06/15 16:12:41<br>Sample rate: 25<br>Bandpass filter. Corners: 0.05 Hz (20 s) and 0.025 Hz (40 s)</div>
<div class="a" style="left:491px;top:120px;font-size:16px;line-height:22px;color:#d42a2a"><div style="letter-spacing:0.34px">GRECE 6.2 20130615 16:10:59 UTC, Lat 34.24 N, Lon 24.97 E</div><div style="letter-spacing:0.64px">~2695 km, Lehmann horizontal 60°, période 7s</div></div>
<div class="a" style="left:85px;top:268px;font-size:11px;line-height:12.5px;color:#c0404c">Ondes P<br>(16:16:15)</div>
<div class="a" style="left:248px;top:270px;font-size:11px;line-height:12.5px;color:#c0404c">Ondes S<br>(16:20:35)</div>
<div class="a" style="left:150.5px;top:488.4px;font-size:32px;line-height:44.5px;color:#dc2222">
<div style="letter-spacing:-0.95px">GRECE mag = 6.2</div>
<div style="letter-spacing:1.06px">15/06/2013 16:10:59 UTC</div>
<div style="letter-spacing:0.95px">Profondeur = 10 km</div>
<div style="letter-spacing:0.56px">Distance = 2695 km</div>
</div>
<!-- globe -->
<svg class="a" style="left:740px;top:440px" width="230" height="230" viewBox="0 0 1023 1023">
 <defs><clipPath id="gc"><circle cx="517.5" cy="520" r="441"/></clipPath></defs>
 <circle cx="517.5" cy="520" r="441" fill="#5cbcf2"/>
 <g clip-path="url(#gc)">
  <g fill="#3fae62" stroke="#1c3a30" stroke-width="3">
   <path d="M158,280 L228,210 L315,158 L419,115 L523,89 L558,123 L471,158 L419,193 L480,236 L471,280 L402,306 L350,289 L332,236 L289,245 L271,297 L202,306Z"/>
   <path d="M384,534 L393,489 L428,471 L454,445 L462,410 L480,358 L523,323 L558,297 L593,289 L610,306 L593,245 L628,202 L593,158 L610,123 L680,123 L732,158 L793,202 L845,254 L889,315 L923,402 L941,471 L955,540 L962,600 L930,610 L890,560 L850,520 L800,600 L770,540 L720,500 L692,520 L622,515 L567,522 L540,492 L500,497 L470,482 L430,502Z"/>
   <path d="M567,536 L623,515 L671,529 L692,570 L678,605 L643,632 L616,643 L602,618 L581,577Z"/>
   <path d="M374.5,501.3 L402.1,497.7 L443.5,501.3 L457.3,528.9 L498.6,532.4 L553.8,525.3 L567.6,542.7 L601.8,611.6 L643.2,639.2 L670.8,625.4 L636.5,680.5 L595.1,735.7 L601.8,763.3 L567.6,818.4 L526.2,866.5 L484.8,859.8 L457.3,811.3 L443.5,749.5 L429.7,694.3 L415.9,666.8 L367.4,652.9 L326,639.2 L305.6,604.5 L302,570.2 L333.2,528.9Z"/>
   <path d="M60,420 L110,470 L140,540 L180,640 L190,670 L160,720 L140,745 L100,700 L70,600 L60,520Z"/>
   <path d="M620,770 L655,750 L660,800 L630,820Z"/>
   <path d="M405,395 L430,365 L442,420 L412,432Z"/>
  </g>
  <g fill="none" stroke="#1c4a34" stroke-width="2" opacity="0.75">
   <path d="M330,560 L400,570 L460,560 L500,600 L560,590 M400,570 L410,640 M460,560 L470,660 L520,700 L600,690 M500,600 L520,700 M430,700 L500,760 L580,740 M470,800 L560,790 M500,860 L540,820"/>
   <path d="M450,440 L520,450 L560,420 L600,400 M520,450 L530,490 M560,420 L600,480 M480,400 L520,380 L560,340 M600,400 L680,420 L760,420 L840,440 M680,420 L700,360 L760,300 M760,420 L780,480 M840,440 L860,500 M620,560 L680,580 M700,300 L820,260 M620,330 L700,360"/>
  </g>
  <g fill="#5cbcf2" stroke="#1c3a30" stroke-width="2">
   <ellipse cx="605" cy="458" rx="26" ry="12"/>
   <ellipse cx="652" cy="465" rx="9" ry="26"/>
   <path d="M495,375 L525,365 L540,420 L510,435 L500,410Z"/>
   <path d="M270,215 L330,185 L340,225 L300,240Z"/>
  </g>
  <g fill="none" stroke="#1a3a6a" stroke-width="2.6" opacity="0.85">
   <path d="M90,570 Q520,790 950,575"/>
   <path d="M150,780 Q510,900 870,780"/>
   <path d="M85,400 Q520,600 955,400"/>
   <ellipse cx="527" cy="215" rx="125" ry="100"/>
   <ellipse cx="527" cy="250" rx="330" ry="225"/>
   <path d="M527,197 Q520,600 540,980"/>
   <path d="M527,197 Q390,420 384,980"/>
   <path d="M527,197 Q250,380 215,900"/>
   <path d="M527,197 Q720,400 700,960"/>
   <path d="M527,197 Q880,400 880,820"/>
   <path d="M527,197 Q120,380 100,700"/>
   <path d="M527,197 Q950,300 960,560"/>
   <path d="M527,197 Q330,100 250,80"/>
   <path d="M527,197 Q700,100 800,90"/>
  </g>
  <g fill="none" stroke="#b04a56" stroke-width="5">
   <path d="M158,445 L175,514 L219,619 L271,654 L306,680 L297,749 L306,827 L314,897 L332,914 L402,940 L480,950 L541,945"/>
   <path d="M110,300 L130,360 L158,445"/>
   <path d="M180,480 L230,440 L300,430 L330,370 L390,330 L450,290 L520,250 L600,220 L680,140 L700,100"/>
   <path d="M376,488 L445,497 L506,497 L575,488 L636,523 L697,540 L758,471 L828,497 L863,506 L889,601 L941,610"/>
   <path d="M601,627 L558,619 M558,619 L544,671 L541,705 L550,775 L567,810 L541,853 L575,880 L558,932 L541,945"/>
   <path d="M601,627 L680,601 L697,558 L689,610 L732,645 L758,688 L749,775 L793,810 L793,853"/>
   <path d="M758,688 L845,645 L871,575 L889,523"/>
   <path d="M793,810 L680,853 L593,897 L541,940"/>
   <path d="M740,180 L720,260 L760,320 L820,330 L860,280 L850,200 L790,190Z"/>
   <path d="M850,300 L880,350 L900,420 L930,480 L940,560"/>
   <path d="M60,380 L100,470 L90,520"/>
  </g>
 </g>
 <circle cx="517.5" cy="520" r="441" fill="none" stroke="#1a2a50" stroke-width="6"/>
 <path d="M515,488 L524,508 L546,508 L529,522 L537,544 L515,531 L493,544 L501,522 L484,508 L506,508Z" fill="#ff2a10" stroke="#ff2a10" stroke-width="10" stroke-linejoin="round"/>
</svg>
<!-- scrollbar -->
<div class="a" style="left:0;top:750px;width:1022px;height:13px;background-color:#f4f4f4;background-image:linear-gradient(45deg,#e6e6e6 25%,transparent 25%,transparent 75%,#e6e6e6 75%),linear-gradient(45deg,#e6e6e6 25%,transparent 25%,transparent 75%,#e6e6e6 75%);background-size:2px 2px;background-position:0 0,1px 1px;border-left:2px solid #a8a8a8"></div>
<div class="a" style="left:0;top:750px;width:2px;height:15px;background:#a0a0a0"></div>
<div class="a" style="left:2px;top:750px;width:17px;height:13px;background:#eeeeee;border-right:1px solid #777"></div>
<svg class="a" style="left:7px;top:752px" width="6" height="9" viewBox="0 0 6 9"><path d="M5 0V9L0 4.5Z" fill="#000"/></svg>
<div class="a" style="left:48px;top:750px;width:17px;height:13px;background:#ececec;border-right:1px solid #777"></div>
<div class="a" style="left:1006px;top:750px;width:16px;height:16px;background:#eeeeee;border-right:1px solid #777;border-bottom:1px solid #777"></div>
<svg class="a" style="left:1011px;top:754px" width="6" height="9" viewBox="0 0 6 9"><path d="M0 0V9L5 4.5Z" fill="#000"/></svg>
<!-- tables -->
<div class="tbl" style="left:-0.5px;top:768px;width:360px">
<div><span style="left:5.5px;letter-spacing:0.7px">Modèle: iasp91</span></div>
<div><span style="left:5.5px;letter-spacing:0.4px">Type</span><span style="left:53.4px;letter-spacing:0.6px">Durée t</span><span style="left:197px;letter-spacing:0.5px">Date Heure UTC</span><span style="left:293px;letter-spacing:0.8px">Take off</span></div>
<div><span style="left:5.5px;letter-spacing:0.4px">Onde</span><span style="left:53.4px;letter-spacing:0.4px">sssss.ms</span><span style="left:149.7px;letter-spacing:-0.1px">YYYY-MM-JJ HH:mm:ss.ms</span><span style="left:293px">(deg)</span></div>
<div></div>
<div><span style="left:5.5px">P</span><span style="left:53.4px">316.667</span><span style="left:149.7px">2013-06-15 16:16:15.66</span><span style="left:293px">28.48</span></div>
<div><span style="left:5.5px">P</span><span style="left:53.4px">317.533</span><span style="left:149.7px">2013-06-15 16:16:16.53</span><span style="left:293px">32.89</span></div>
<div><span style="left:5.5px">pP</span><span style="left:53.4px">319.698</span><span style="left:149.7px">2013-06-15 16:16:18.69</span><span style="left:293px">151.50</span></div>
<div><span style="left:5.5px">pP</span><span style="left:53.4px">320.429</span><span style="left:149.7px">2013-06-15 16:16:19.42</span><span style="left:293px">147.05</span></div>
<div><span style="left:5.5px">sP</span><span style="left:53.4px">321.043</span><span style="left:149.7px">2013-06-15 16:16:20.04</span><span style="left:293px">163.96</span></div>
<div><span style="left:5.5px">sP</span><span style="left:53.4px">321.806</span><span style="left:149.7px">2013-06-15 16:16:20.80</span><span style="left:293px">161.64</span></div>
<div><span style="left:5.5px">PnPn</span><span style="left:53.4px">346.142</span><span style="left:149.7px">2013-06-15 16:16:45.14</span><span style="left:293px">45.59</span></div>
<div><span style="left:5.5px">PcP</span><span style="left:53.4px">536.729</span><span style="left:149.7px">2013-06-15 16:19:55.72</span><span style="left:293px">6.50</span></div>
<div><span style="left:5.5px">S</span><span style="left:53.4px">576.134</span><span style="left:149.7px">2013-06-15 16:20:35.13</span><span style="left:293px">29.26</span></div>
<div><span style="left:5.5px">pS</span><span style="left:53.4px">579.655</span><span style="left:149.7px">2013-06-15 16:20:38.65</span><span style="left:293px">122.28</span></div>
<div><span style="left:5.5px">S</span><span style="left:53.4px">580.393</span><span style="left:149.7px">2013-06-15 16:20:39.39</span><span style="left:293px">34.72</span></div>
<div><span style="left:5.5px">SPg</span><span style="left:53.4px">580.575</span><span style="left:149.7px">2013-06-15 16:20:39.57</span><span style="left:293px">35.46</span></div>
<div><span style="left:5.5px">sS</span><span style="left:53.4px">581.327</span><span style="left:149.7px">2013-06-15 16:20:40.32</span><span style="left:293px">150.70</span></div>
<div><span style="left:5.5px">sS</span><span style="left:53.4px">585.284</span><span style="left:149.7px">2013-06-15 16:20:44.28</span><span style="left:293px">145.19</span></div>
<div><span style="left:5.5px">Sn</span><span style="left:53.4px">601.004</span><span style="left:149.7px">2013-06-15 16:21:00.00</span><span style="left:293px">46.11</span></div>
</div>
<div class="tbl" style="left:0;top:762px;width:730px">
<div><span style="left:355.8px">sSn</span><span style="left:403.3px">605.133</span><span style="left:499.4px">2013-06-15 16:21:04.13</span><span style="left:643.3px">133.86</span></div>
<div><span style="left:355.8px">SnSn</span><span style="left:403.3px">619.302</span><span style="left:499.4px">2013-06-15 16:21:18.30</span><span style="left:643.3px">47.78</span></div>
<div><span style="left:355.8px">ScP</span><span style="left:403.3px">755.324</span><span style="left:499.4px">2013-06-15 16:23:34.32</span><span style="left:643.3px">4.77</span></div>
<div><span style="left:355.8px">PcS</span><span style="left:403.3px">756.584</span><span style="left:499.4px">2013-06-15 16:23:35.58</span><span style="left:643.3px">8.26</span></div>
<div><span style="left:355.8px">ScS</span><span style="left:403.3px">982.728</span><span style="left:499.4px">2013-06-15 16:27:21.72</span><span style="left:643.3px">6.95</span></div>
<div><span style="left:355.8px">PKiKP</span><span style="left:403.3px">999.394</span><span style="left:499.4px">2013-06-15 16:27:38.39</span><span style="left:643.3px">1.60</span></div>
<div><span style="left:355.8px">pPKiKP</span><span style="left:403.3px">1002.841</span><span style="left:499.4px">2013-06-15 16:27:41.84</span><span style="left:643.3px">178.40</span></div>
<div><span style="left:355.8px">sPKiKP</span><span style="left:403.3px">1004.093</span><span style="left:499.4px">2013-06-15 16:27:43.09</span><span style="left:643.3px">179.07</span></div>
<div><span style="left:355.8px">SKiKP</span><span style="left:403.3px">1210.649</span><span style="left:499.4px">2013-06-15 16:31:09.64</span><span style="left:643.3px">0.98</span></div>
<div><span style="left:355.8px">PKKPdf</span><span style="left:403.3px">1904.596</span><span style="left:499.4px">2013-06-15 16:42:43.59</span><span style="left:643.3px">1.64</span></div>
<div><span style="left:355.8px">SKKPdf</span><span style="left:403.3px">2115.830</span><span style="left:499.4px">2013-06-15 16:46:14.83</span><span style="left:643.3px">0.90</span></div>
<div><span style="left:355.8px">PKKSdf</span><span style="left:403.3px">2117.083</span><span style="left:499.4px">2013-06-15 16:46:16.08</span><span style="left:643.3px">1.55</span></div>
<div><span style="left:355.8px">SKKSdf</span><span style="left:403.3px">2328.284</span><span style="left:499.4px">2013-06-15 16:49:47.28</span><span style="left:643.3px">0.86</span></div>
<div><span style="left:355.8px">P'P'df</span><span style="left:403.3px">2413.846</span><span style="left:499.4px">2013-06-15 16:51:12.84</span><span style="left:643.3px">2.13</span></div>
<div><span style="left:355.8px">P'P'ab</span><span style="left:403.3px">2548.287</span><span style="left:499.4px">2013-06-15 16:53:27.28</span><span style="left:643.3px">13.35</span></div>
<div><span style="left:355.8px">S'S'df</span><span style="left:403.3px">3263.083</span><span style="left:499.4px">2013-06-15 17:05:22.08</span><span style="left:643.3px">0.97</span></div>
</div>
<!-- map -->
<svg class="a" style="left:734px;top:766px" width="259" height="264" viewBox="0 0 1017 1033" preserveAspectRatio="none">
 <defs><filter id="tex" x="0" y="0" width="100%" height="100%"><feTurbulence type="fractalNoise" baseFrequency="0.11" numOctaves="2" seed="3" result="n"/><feColorMatrix in="n" type="matrix" values="0 0 0 0 0.35  0 0 0 0 0.42  0 0 0 0 0.25  0 0 0 -1.6 0.95" result="c"/><feComposite in="c" in2="SourceGraphic" operator="in" result="t"/><feMerge><feMergeNode in="SourceGraphic"/><feMergeNode in="t"/></feMerge></filter></defs>
 <rect width="1017" height="1033" fill="#9bb4cf"/>
 <path d="M0,576 L50,586 L100,601 L135,611 L145,641 L175,661 L225,671 L280,701 L315,681 L320,641 L315,616 L350,591 L400,581 L435,601 L475,616 L508,636 L623,666 L683,671 L718,651 L748,646 L788,666 L858,666 L883,616 L903,556 L908,516 L928,516 L933,415 L1017,400 L1017,1033 L0,1033Z" fill="#ebead4"/>
 <path d="M0,760 L150,740 L300,800 L520,760 L700,820 L760,1033 L0,1033Z" fill="#edefcf" opacity="0.8"/>
 <path d="M0,576 L100,601 L135,611 L120,640 L40,630 L0,620Z" fill="#dfe4c0"/>
 <path d="M315,616 L350,591 L400,581 L475,616 L440,640 L380,630 L330,650Z" fill="#dce3bb"/>
 <path d="M688,651 L748,646 L778,676 L750,706 L700,690Z" fill="#c9d6a6"/>
 <path d="M903,556 L928,516 L1017,480 L1017,880 L960,840 L900,740 L880,660Z" fill="#d6dfb6"/>
 <path d="M793,716 L813,751 L843,796 L868,806 L878,791 L888,736 L896,741 L888,801 L918,826 L948,866 L978,916 L1017,966 L1017,1033 L923,1033 L903,966 L878,906 L853,856 L828,816 L808,776 L791,731Z" fill="#9bb4cf"/>
 <g fill="#d5ddb5" filter="url(#tex)">
  <path d="M0,0 L75,0 L85,60 L115,125 L165,150 L210,185 L250,210 L255,235 L235,240 L210,215 L190,240 L205,270 L195,290 L165,320 L150,335 L155,305 L175,280 L160,240 L125,200 L85,165 L30,130 L0,125Z"/>
  <path d="M30,340 L60,325 L125,340 L135,330 L125,395 L90,390 L40,360Z"/>
  <path d="M135,0 L648,0 L643,40 L628,75 L623,130 L633,165 L600,180 L558,190 L508,175 L470,190 L440,200 L425,230 L450,240 L485,295 L450,320 L470,340 L440,370 L430,410 L390,400 L365,350 L370,325 L330,320 L345,295 L330,250 L300,210 L295,165 L290,130 L260,100 L210,60 L165,30Z"/>
  <path d="M558,210 L600,200 L633,190 L718,170 L768,150 L808,135 L888,130 L933,150 L1017,185 L1017,480 L928,516 L933,415 L948,395 L928,390 L858,400 L818,425 L788,420 L733,400 L673,425 L658,400 L608,380 L588,340 L568,300 L578,260 L553,235Z"/>
  <path d="M793,480 L833,465 L868,455 L858,480 L808,500Z"/>
  <path d="M448,458 L490,452 L560,455 L545,472 L470,475Z"/>
  <path d="M520,330 L535,335 L530,350Z M560,360 L575,365 L565,380Z M500,280 L515,290 L505,300Z"/>
 </g>
 <g fill="none" stroke="#fff" stroke-width="5" opacity="0.85">
  <path d="M200,0 L260,80 L320,120 L330,190 L340,250"/>
  <path d="M330,110 L420,60 L560,40 L640,30"/>
  <path d="M420,0 L440,100 L450,190"/>
  <path d="M505,640 L505,1033"/>
  <path d="M928,516 L955,560 L1017,590"/>
  <path d="M905,650 L1017,640"/>
  <path d="M888,736 L900,640"/>
 </g>
 <g font-family="Liberation Sans" font-weight="bold" fill="#0a0a0a" stroke="#fff" stroke-width="7" paint-order="stroke" text-anchor="middle">
  <text x="22" y="48" font-size="40">alia</text>
  <text x="22" y="86" font-size="36">aly)</text>
  <text x="345" y="12" font-size="30">Србија</text>
  <text x="348" y="44" font-size="28">(Serbia)</text>
  <text x="517" y="128" font-size="44">България</text>
  <text x="513" y="165" font-size="33">(Bulgaria)</text>
  <text x="408" y="256" font-size="44">Ελλάς</text>
  <text x="410" y="297" font-size="33">(Greece)</text>
  <text x="910" y="283" font-size="42">Türkiye</text>
  <text x="905" y="322" font-size="33">(Turkey)</text>
  <text x="925" y="550" font-size="28">(Lebanon)</text>
  <text x="838" y="652" font-size="28">(Israel)</text>
  <text x="958" y="692" font-size="28">(Jordan)</text>
  <text x="220" y="888" font-size="33">(Libya)</text>
  <text x="695" y="878" font-size="33">(Egypt)</text>
 </g>
 <g font-family="Liberation Sans" font-style="italic" fill="#1e2c48" stroke="#d4e0ec" stroke-width="5" paint-order="stroke" text-anchor="middle" font-size="36">
  <text x="865" y="70">Black Sea</text>
  <text x="240" y="498">Mediterranean</text>
  <text x="240" y="536">Sea</text>
 </g>
 <path d="M180,835 Q220,850 260,820 M640,830 L700,820 Q740,825 760,820 M860,500 L980,500 M790,605 L880,600 M930,650 L990,640" fill="none" stroke="#111" stroke-width="4"/>
 <path d="M520,500 Q560,450 600,455 Q590,490 520,505Z" fill="#50566a" opacity="0.7"/>
 <path d="M507,515 L480,460 A33,33 0 1 1 535,460 Z" fill="#5ab43c" stroke="#1a4010" stroke-width="5"/>
 <text x="507" y="448" font-family="Liberation Sans" font-size="38" fill="#112" text-anchor="middle">E</text>
 <text x="10" y="1005" font-family="Liberation Serif" font-weight="bold" font-size="62" fill="#f8f8f8" stroke="#8a8a8a" stroke-width="3" paint-order="stroke">Google</text>
 <text x="378" y="1028" font-family="Liberation Sans" font-size="30" fill="#111" textLength="630">Map data ©2013 Basarsoft, ORION-ME</text>
</svg>
</body></html>
